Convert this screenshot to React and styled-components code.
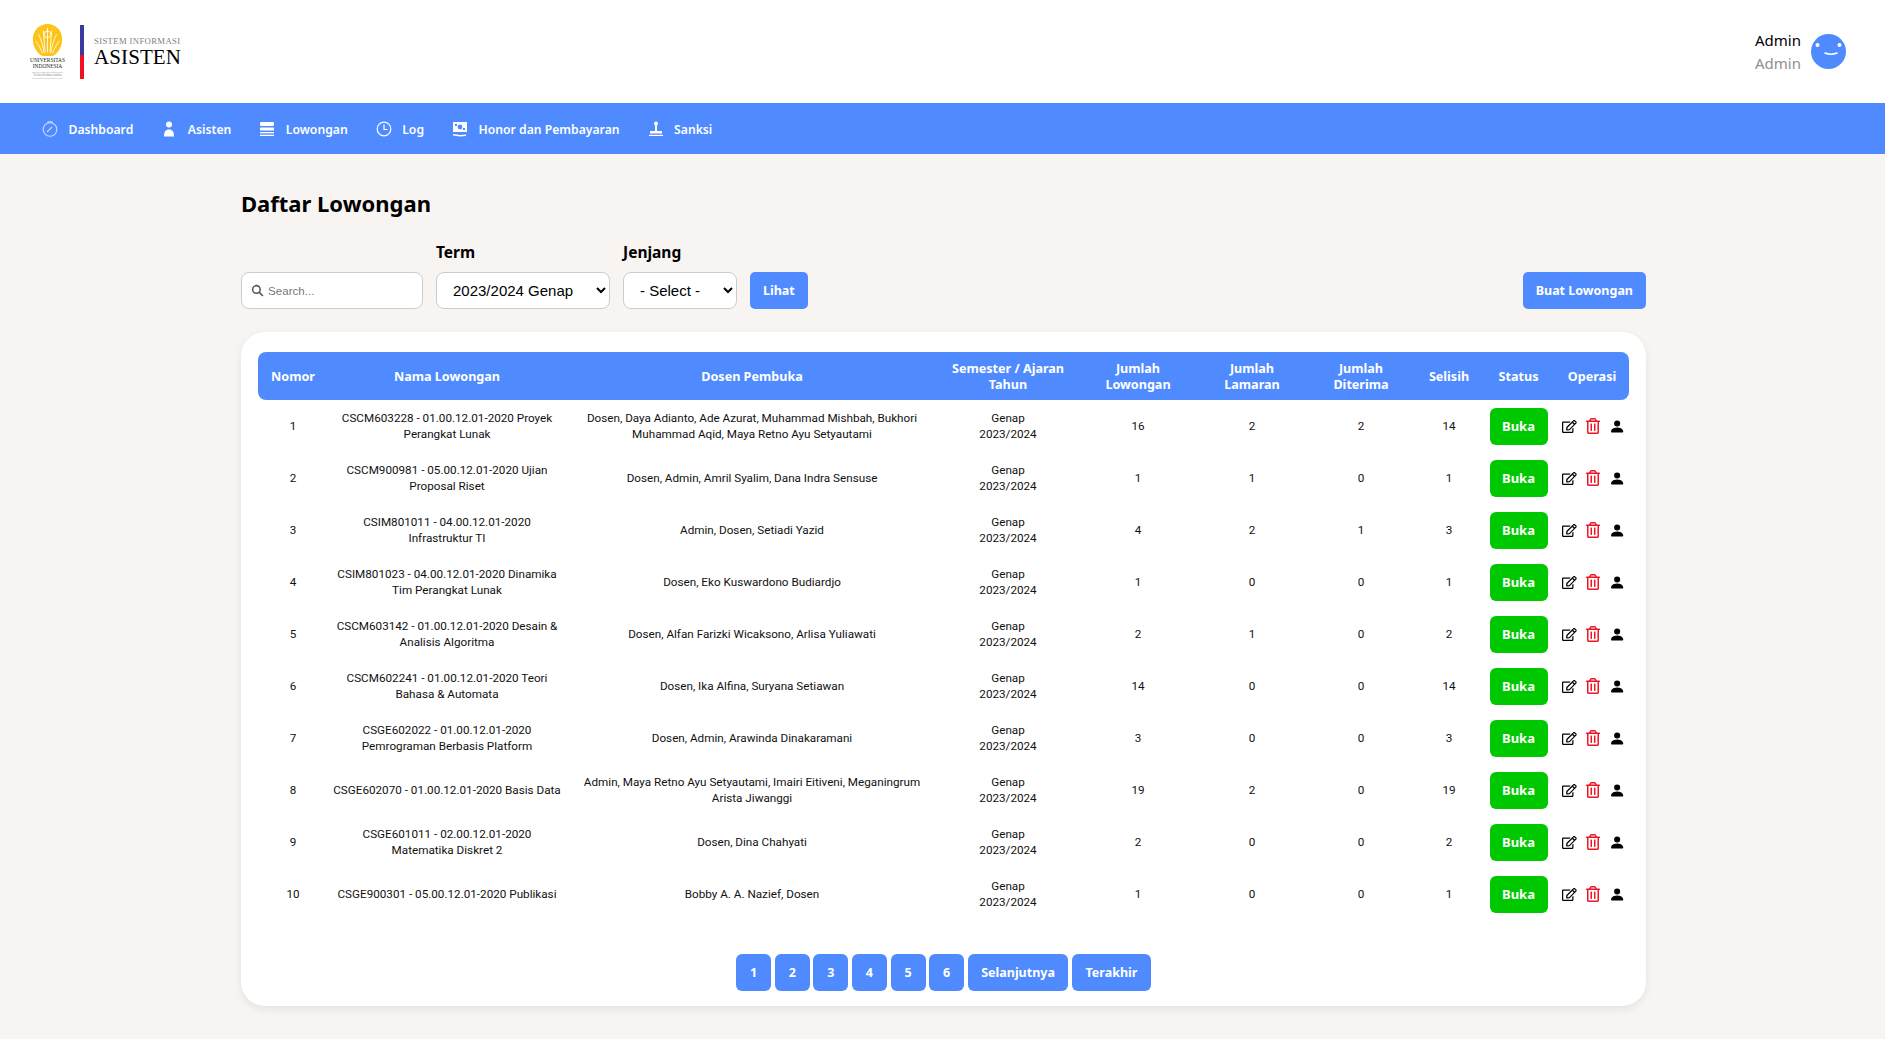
import React from "react";
import styled, { createGlobalStyle } from "styled-components";
import { FaRegEdit, FaRegTrashAlt } from "react-icons/fa";
import { BsPersonFill } from "react-icons/bs";

const Global = createGlobalStyle`
  html, body { margin: 0; padding: 0; background: #f7f4f2; }
  body { font-family: "Noto Sans", "Open Sans", sans-serif; color: #000; }
  * { box-sizing: border-box; }
`;

const BLUE = "#4f8bff";

const Header = styled.header`
  height: 103px; background: #fff; display: flex; align-items: center;
  justify-content: space-between; padding: 0 39px 0 31px;
`;
const Logo = styled.div`display: flex; align-items: center; gap: 16px;`;
const Emblem = styled.div`display: flex; flex-direction: column; align-items: center; width: 33px;`;
const EmblemText = styled.span`
  font: 5.4px/5.6px "Liberation Serif", serif; color: #222; text-align: center; white-space: nowrap;
`;
const EmblemMotto = styled.span`
  font: 3px/5px "Liberation Serif", serif; color: #888; border-top: 1px solid #ddd; border-bottom: 1px solid #ddd;
  margin-top: 2px; width: 31px; text-align: center; white-space: nowrap;
`;
const Divider = styled.div`
  width: 4px; height: 54px; background: linear-gradient(#3a3a9e 0 55%, #f01023 55% 100%);
`;
const LogoText = styled.div`display: flex; flex-direction: column; margin-left: -6px;`;
const LogoSmall = styled.span`font: 8.7px/11px "Liberation Serif", serif; color: #808080; letter-spacing: .35px; white-space: nowrap;`;
const LogoBig = styled.span`font: 21px/20px "Liberation Serif", serif; color: #000; letter-spacing: .1px;`;
const User = styled.div`display: flex; align-items: center; gap: 10px;`;
const UserNames = styled.div`display: flex; flex-direction: column; align-items: flex-end; gap: 3px;`;
const UserName = styled.span`font-size: 15px; line-height: 20px; color: ${p => p.$muted ? "#909090" : "#000"};`;

const Nav = styled.nav`
  height: 51px; background: ${BLUE}; display: flex; align-items: center; padding: 1px 0 0 42px; gap: 28px;
`;
const NavItem = styled.a`
  display: flex; align-items: center; gap: 10.5px; color: #fff; font-size: 12.2px; font-weight: 600; white-space: nowrap;
`;
const NavIcon = styled.svg`width: 16px; height: 16px; color: ${p => p.$dim ? "#c8dcff" : "#fff"}; flex: none;`;

const Main = styled.main`width: 1405px; margin-left: 241px; padding-top: 34px; padding-bottom: 34px;`;
const Title = styled.h1`margin: 0 0 24px; font-size: 22px; line-height: 30px; font-weight: 700;`;
const Filters = styled.div`display: flex; align-items: flex-end; gap: 13px; margin-bottom: 23px;`;
const Field = styled.div`display: flex; flex-direction: column; gap: 10px;`;
const Label = styled.label`font-size: 15.5px; line-height: 20px; font-weight: 700;`;
const SearchBox = styled.div`
  width: 182px; height: 37px; background: #fff; border: 1px solid #ccc; border-radius: 8px;
  display: flex; align-items: center; gap: 2px; padding-left: 9px;
`;
const SearchInput = styled.input`
  border: 0; outline: 0; width: 140px; font: 11.6px "Liberation Sans", sans-serif; background: transparent;
  &::placeholder { color: #777; }
`;
const Select = styled.select`
  height: 37px; width: ${p => p.$w}px; background: #fff; border: 1px solid #ccc; border-radius: 8px;
  font: 15px "Liberation Sans", Arial, sans-serif; color: #000; padding: 0 12px;
`;
const Button = styled.button`
  background: ${BLUE}; color: #fff; border: 0; border-radius: 5px; font-family: inherit; font-weight: 700;
  font-size: 12.5px; height: 37px; padding: 0 13px; white-space: nowrap;
`;
const Spacer = styled.div`flex: 1;`;

const Card = styled.section`
  background: #fff; border-radius: 24px; padding: 20px 17px 15px; box-shadow: 0 3px 8px rgba(0,0,0,.08);
`;
const Table = styled.table`width: 100%; border-collapse: separate; border-spacing: 0; table-layout: fixed;`;
const Col = styled.col`width: ${p => p.$w}px;`;
const Th = styled.th`
  background: ${BLUE}; color: #fff; font-size: 12.6px; line-height: 16px; font-weight: 700; height: 48px; padding: 1px 4px 0;
  text-align: center;
  &:first-child { border-radius: 8px 0 0 8px; }
  &:last-child { border-radius: 0 8px 8px 0; }
`;
const Td = styled.td`
  height: 52px; padding: 0 4px; font-family: Roboto, sans-serif; font-size: 11.7px; line-height: 16px; text-align: center; color: #111;
`;
const Status = styled.span`
  display: inline-flex; align-items: center; justify-content: center; width: 58px; height: 37px; border-radius: 6px;
  background: #00c800; color: #fff; font-family: "Noto Sans", sans-serif; font-weight: 700; font-size: 13px;
`;
const Ops = styled.div`display: flex; align-items: center; justify-content: center; gap: 9px; padding-left: 3px;`;
const EditIcon = styled(FaRegEdit)`font-size: 19px; color: #000;`;
const TrashIcon = styled(FaRegTrashAlt)`font-size: 18px; color: #f01424;`;
const PersonIcon = styled(BsPersonFill)`font-size: 21px; color: #000;`;
const Pager = styled.div`display: flex; justify-content: center; gap: 3.6px; margin-top: 34px;`;
const PageBtn = styled(Button)`min-width: 35px; padding: 0 ${p => p.$wide ? 13.5 : 0}px; border-radius: 6px;`;

const rows = [
  ["CSCM603228 - 01.00.12.01-2020 Proyek Perangkat Lunak", "Dosen, Daya Adianto, Ade Azurat, Muhammad Mishbah, Bukhori Muhammad Aqid, Maya Retno Ayu Setyautami", 16, 2, 2, 14],
  ["CSCM900981 - 05.00.12.01-2020 Ujian Proposal Riset", "Dosen, Admin, Amril Syalim, Dana Indra Sensuse", 1, 1, 0, 1],
  ["CSIM801011 - 04.00.12.01-2020 Infrastruktur TI", "Admin, Dosen, Setiadi Yazid", 4, 2, 1, 3],
  ["CSIM801023 - 04.00.12.01-2020 Dinamika Tim Perangkat Lunak", "Dosen, Eko Kuswardono Budiardjo", 1, 0, 0, 1],
  ["CSCM603142 - 01.00.12.01-2020 Desain & Analisis Algoritma", "Dosen, Alfan Farizki Wicaksono, Arlisa Yuliawati", 2, 1, 0, 2],
  ["CSCM602241 - 01.00.12.01-2020 Teori Bahasa & Automata", "Dosen, Ika Alfina, Suryana Setiawan", 14, 0, 0, 14],
  ["CSGE602022 - 01.00.12.01-2020 Pemrograman Berbasis Platform", "Dosen, Admin, Arawinda Dinakaramani", 3, 0, 0, 3],
  ["CSGE602070 - 01.00.12.01-2020 Basis Data", "Admin, Maya Retno Ayu Setyautami, Imairi Eitiveni, Meganingrum Arista Jiwanggi", 19, 2, 0, 19],
  ["CSGE601011 - 02.00.12.01-2020 Matematika Diskret 2", "Dosen, Dina Chahyati", 2, 0, 0, 2],
  ["CSGE900301 - 05.00.12.01-2020 Publikasi", "Bobby A. A. Nazief, Dosen", 1, 0, 0, 1],
];
const widths = [70, 238, 372, 140, 120, 108, 110, 66, 73, 74];
const heads = ["Nomor", "Nama Lowongan", "Dosen Pembuka", "Semester / Ajaran Tahun", "Jumlah Lowongan", "Jumlah Lamaran", "Jumlah Diterima", "Selisih", "Status", "Operasi"];

const navItems = [
  ["Dashboard", <g key="d" fill="none" stroke="currentColor" strokeWidth="1.1"><circle cx="8" cy="8.5" r="6.8" /><path d="M6 2V.8h4V2M5 11l5-5" /></g>, true],
  ["Asisten", <g key="a" fill="currentColor"><circle cx="8" cy="3.6" r="3" /><path d="M3 15.5c0-5 1.5-7 5-7s5 2 5 7z" /></g>],
  ["Lowongan", <g key="l" fill="currentColor"><rect x="1" y="1" width="14" height="4" rx="1" /><rect x="1" y="6.5" width="14" height="3" rx=".6" /><rect x="1" y="11" width="14" height="1.3" /><rect x="1" y="13.7" width="14" height="1.3" /></g>],
  ["Log", <g key="g" fill="none" stroke="currentColor" strokeWidth="1.2"><circle cx="8" cy="8" r="6.8" /><path d="M8 3.5V8.5H11.5" /></g>],
  ["Honor dan Pembayaran", <g key="h"><path fillRule="evenodd" fill="currentColor" d="M1 1h14v10H1zM5 3H3v2h2zM13 7h-2v2h2zM8 3.6a2.4 2.4 0 1 0 0 4.8 2.4 2.4 0 0 0 0-4.8z" /><path d="M1 13l7 1 6-.5V15l-6 .4L1 14.6z" fill="currentColor" /></g>],
  ["Sanksi", <g key="s" fill="currentColor"><circle cx="8" cy="2.6" r="2" /><path d="M7 4h2v6.5H7z" /><rect x="2" y="10" width="12" height="2.6" rx=".6" /><rect x="1" y="13.8" width="14" height="1.2" /></g>],
];

export default function App() {
  return (
    <>
      <Global />
      <Header>
        <Logo>
          <Emblem>
            <svg width="31" height="34" viewBox="0 0 31 36">
              <path d="M15.5 0C7 0 0 7 0 16c0 8 4 15 10 18h11c6-3 10-10 10-18C31 7 24 0 15.5 0z" fill="#fcc419" />
              <g stroke="#fff" strokeWidth=".9" fill="none">
                <path d="M15.5 4v26M11 7l2 23M20 7l-2 23M6 11c3 6 5 13 6 20M25 11c-3 6-5 13-6 20M3 18c3 4 6 9 7 13M28 18c-3 4-6 9-7 13" />
                <circle cx="15.5" cy="11" r="3.5" />
              </g>
            </svg>
            <EmblemText>UNIVERSITAS</EmblemText>
            <EmblemText>INDONESIA</EmblemText>
            <EmblemMotto>Veritas Probitas Iustitia</EmblemMotto>
          </Emblem>
          <Divider />
          <LogoText>
            <LogoSmall>SISTEM INFORMASI</LogoSmall>
            <LogoBig>ASISTEN</LogoBig>
          </LogoText>
        </Logo>
        <User>
          <UserNames>
            <UserName>Admin</UserName>
            <UserName $muted>Admin</UserName>
          </UserNames>
          <svg width="35" height="35" viewBox="0 0 35 35">
            <circle cx="17.5" cy="17.5" r="17.5" fill={BLUE} />
            <circle cx="6.5" cy="11" r="2" fill="#fff" />
            <circle cx="28.5" cy="11" r="2" fill="#fff" />
            <path d="M14 19c4 1.6 8 1.6 12 0" stroke="#fff" strokeWidth="1.6" fill="none" strokeLinecap="round" />
          </svg>
        </User>
      </Header>
      <Nav>
        {navItems.map(([label, icon, dim]) => (
          <NavItem key={label}>
            <NavIcon viewBox="0 0 16 16" $dim={dim}>{icon}</NavIcon>
            {label}
          </NavItem>
        ))}
      </Nav>
      <Main>
        <Title>Daftar Lowongan</Title>
        <Filters>
          <SearchBox>
            <svg width="13" height="13" viewBox="0 0 24 24" fill="none" stroke="#555" strokeWidth="2.8"><circle cx="10" cy="10" r="7" /><path d="M15.5 15.5L22 22" /></svg>
            <SearchInput placeholder="Search..." />
          </SearchBox>
          <Field>
            <Label>Term</Label>
            <Select $w={174} defaultValue="2023/2024 Genap"><option>2023/2024 Genap</option></Select>
          </Field>
          <Field>
            <Label>Jenjang</Label>
            <Select $w={114} defaultValue="- Select -"><option>- Select -</option></Select>
          </Field>
          <Button>Lihat</Button>
          <Spacer />
          <Button>Buat Lowongan</Button>
        </Filters>
        <Card>
          <Table>
            <colgroup>{widths.map((w, i) => <Col key={i} $w={w} />)}</colgroup>
            <thead><tr>{heads.map(h => <Th key={h}>{h}</Th>)}</tr></thead>
            <tbody>
              {rows.map((r, i) => (
                <tr key={i}>
                  <Td>{i + 1}</Td>
                  <Td>{r[0]}</Td>
                  <Td>{r[1]}</Td>
                  <Td>Genap<br />2023/2024</Td>
                  <Td>{r[2]}</Td>
                  <Td>{r[3]}</Td>
                  <Td>{r[4]}</Td>
                  <Td>{r[5]}</Td>
                  <Td><Status>Buka</Status></Td>
                  <Td><Ops><EditIcon /><TrashIcon /><PersonIcon /></Ops></Td>
                </tr>
              ))}
            </tbody>
          </Table>
          <Pager>
            {["1", "2", "3", "4", "5", "6"].map(n => <PageBtn key={n}>{n}</PageBtn>)}
            <PageBtn $wide>Selanjutnya</PageBtn>
            <PageBtn $wide>Terakhir</PageBtn>
          </Pager>
        </Card>
      </Main>
    </>
  );
}
